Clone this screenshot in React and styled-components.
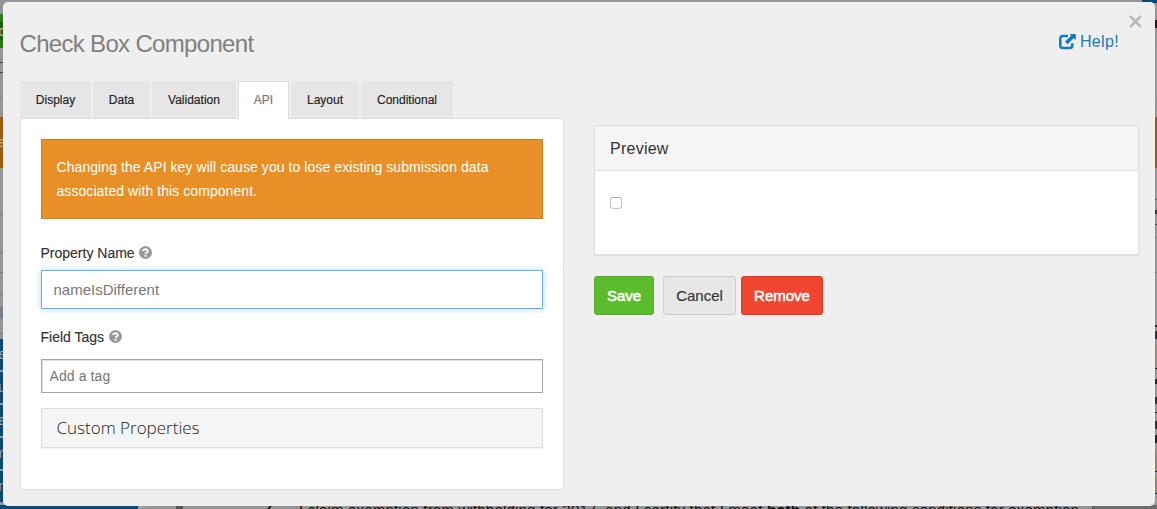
import React from "react";
import styled, { createGlobalStyle, css } from "styled-components";

const Global = createGlobalStyle`
  * { box-sizing: border-box; }
  html, body { margin: 0; height: 100%; overflow: hidden; }
  body { font-family: "Liberation Sans", Arial, sans-serif; color: #333; background: #959595; }
`;

const Page = styled.div`
  position: relative;
  width: 1157px;
  height: 509px;
  overflow: hidden;
  background: #959595;
`;
const Behind = styled.div`
  height: 509px;
  display: flex;
  justify-content: space-between;
`;
const Strip = styled.div`
  width: ${(p) => p.$w}px;
  height: 509px;
  overflow: hidden;
  display: flex;
  flex-direction: column;
`;
const Band = styled.div`
  flex: none;
  height: ${(p) => p.$h}px;
  background: ${(p) => p.$c || "#959595"};
  color: ${(p) => p.$ink || "#222"};
  font-size: 14px;
  line-height: ${(p) => p.$h}px;
  overflow: hidden;
  direction: ${(p) => (p.$end ? "rtl" : "ltr")};
  white-space: nowrap;
`;
const Footer = styled.div`
  position: absolute;
  left: 0;
  top: 505px;
  width: 1157px;
  height: 4px;
  display: flex;
  overflow: hidden;
  background: #959595;
`;
const FooterNav = styled.div`
  width: 138px;
  background: #0b4a78;
`;
const FooterGap = styled.div`
  width: 38px;
  border-left: 7px solid #a0a0a0;
  background: #959595;
`;
const FooterMark = styled.div`
  width: 7px;
  background: #555;
`;
const FooterNumber = styled.div`
  width: 116px;
  padding-left: 82px;
  margin-top: -6px;
  font: italic bold 15px/16px "Liberation Sans", sans-serif;
  color: #111;
`;
const FooterText = styled.div`
  width: 794px;
  height: 8px;
  margin-top: -3px;
  font-size: 15px;
  line-height: 16px;
  letter-spacing: 0.19px;
  white-space: nowrap;
  color: #111;
  border-right: 1px solid #555;
`;
const FooterEnd = styled.div`
  flex: 1;
  background: #6c6c6c;
`;

const Modal = styled.div`
  position: absolute;
  left: 3px;
  top: 2px;
  width: 1152px;
  height: 504px;
  padding: 0 16px 0 17px;
  border-radius: 5px;
  background: #efefef;
`;
const Header = styled.div`
  height: 79px;
  display: flex;
  justify-content: space-between;
`;
const Title = styled.h1`
  margin: 28px 0 0 -0.5px;
  font-size: 24px;
  line-height: 28px;
  font-weight: 400;
  letter-spacing: -0.68px;
  color: #808080;
`;
const Help = styled.a`
  margin: 30px 20px 0 0;
  height: 20px;
  display: flex;
  align-items: center;
  gap: 4px;
  font-size: 16px;
  line-height: 20px;
  letter-spacing: 0.35px;
  color: #127bbe;
`;
const Close = styled.svg`
  position: absolute;
  right: 13px;
  top: 13px;
`;

const Columns = styled.div`
  display: flex;
  gap: 30px;
`;
const Left = styled.div`
  width: 544px;
`;
const Right = styled.div`
  width: 545px;
  padding-top: 44px;
`;
const Tabs = styled.div`
  display: flex;
  gap: 2px;
  height: 37px;
`;
const Tab = styled.div`
  width: ${(p) => p.$w}px;
  height: 37px;
  display: flex;
  justify-content: center;
  font-size: 12px;
  line-height: 38px;
  background: #e6e6e6;
  color: #222;
  -webkit-text-stroke: 0.15px currentColor;
  ${(p) =>
    p.$active &&
    css`
      position: relative;
      height: 38px;
      line-height: 36px;
      background: #fff;
      color: #777;
      border: 1px solid #ddd;
      border-bottom: 0;
    `}
`;
const TabBody = styled.div`
  height: 372px;
  padding: 20px;
  background: #fff;
  border: 1px solid #ddd;
`;
const Alert = styled.div`
  height: 80px;
  padding: 15px 14.5px;
  background: #e89025;
  border: 1px solid #cb7f22;
  color: #fff;
  font-size: 14px;
  line-height: 24px;
  letter-spacing: 0.07px;
  white-space: nowrap;
`;
const Label = styled.label`
  display: flex;
  align-items: center;
  gap: 5px;
  height: 20px;
  margin: ${(p) => p.$top}px 0 0 -0.5px;
  font-size: 14px;
  color: #333;
  -webkit-text-stroke: 0.15px currentColor;
`;
const HelpIcon = styled.svg`
  margin: -2px 0 0 -0.5px;
`;
const Input = styled.div`
  height: 39px;
  margin-top: 7px;
  padding-left: 11.5px;
  border: 1px solid #66afe9;
  box-shadow: 0 0 6px rgba(102, 175, 233, 0.5);
  font-size: 15px;
  line-height: 38px;
  color: #777;
`;
const TagInput = styled.div`
  height: 34px;
  margin-top: 12px;
  padding-left: 7.5px;
  border: 1px solid #a6a6a6;
  box-shadow: inset 1px 1px 1px #ddd;
  font-size: 14px;
  line-height: 33px;
  letter-spacing: 0.1px;
  color: #757575;
`;
const Custom = styled.div`
  height: 40px;
  margin-top: 15px;
  padding-left: 14.5px;
  border: 1px solid #ddd;
  background: #f5f5f5;
  box-shadow: 0 1px 1px rgba(0, 0, 0, 0.05);
  font-family: "Open Sans", sans-serif;
  font-weight: 300;
  font-size: 17px;
  line-height: 38px;
  color: #222;
`;
const Panel = styled.div`
  height: 130px;
  background: #fff;
  border: 1px solid #ddd;
  box-shadow: 0 1px 1px rgba(0, 0, 0, 0.05);
`;
const PanelHead = styled.div`
  height: 45px;
  padding-left: 15px;
  border-bottom: 1px solid #ddd;
  background: #f5f5f5;
  font-size: 16px;
  line-height: 45px;
  letter-spacing: 0.25px;
  color: #333;
`;
const Check = styled.div`
  width: 12px;
  height: 12px;
  margin: 26px 0 0 15px;
  border: 1px solid #c3c3c3;
  border-top-color: #aaa;
  border-radius: 3px;
  background: #fff;
`;
const Actions = styled.div`
  display: flex;
  margin-top: 21px;
`;
const Button = styled.button`
  width: ${(p) => p.$w}px;
  height: 39px;
  margin: 0 ${(p) => p.$gap || 0}px 0 0;
  padding: 0;
  border: 1px solid ${(p) => p.$border};
  border-radius: 3px;
  background: ${(p) => p.$bg};
  color: ${(p) => p.$ink || "#fff"};
  font-family: inherit;
  font-size: 15px;
  -webkit-text-stroke: ${(p) => (p.$ink ? 0.15 : 0.5)}px currentColor;
`;

const HelpMark = () => (
  <HelpIcon width="13" height="13" viewBox="0 0 13 13">
    <circle cx="6.5" cy="6.5" r="6.5" fill="#999" />
    <path d="M4.3 5C4.3 2.7 8.8 2.6 8.8 5C8.8 6.5 6.6 6.4 6.6 8" fill="none" stroke="#fff" strokeWidth="1.9" />
    <rect x="5.6" y="8.9" width="2" height="1.8" fill="#fff" />
  </HelpIcon>
);
const External = () => (
  <svg width="17" height="17" viewBox="0 0 17 17">
    <path
      d="M9 1.9H4Q1.3 1.9 1.3 4.5V11.5Q1.3 14.1 4 14.1H10.7Q13.3 14.1 13.3 11.5V9.3"
      fill="none"
      stroke="#127bbe"
      strokeWidth="2.5"
    />
    <path d="M10 -0.5H16.8V6.3L14.7 4.2L8.6 10.3L6 7.7L12.1 1.6Z" fill="#127bbe" />
  </svg>
);

const LEFT = [
  [14], [8, "#2d7a12"], [18, "#1f5c0c", "#bbb", "o"], [8, "#2d7a12"], [14],
  [1, "#444"], [9], [1, "#444"], [23], [1, "#858585"], [20],
  [51, "#9b5a0e", "#c5b08f", "a"], [46], [1, "#777"], [37], [1, "#777"], [19],
  [1, "#777"], [21], [1, "#777"], [12], [12, "#7b7f8a"], [14], [1, "#777"], [5],
];
const NAV = ["e", "u", "a", "m", "n"];
const RIGHT = [
  [3, "#0b4a78"], [17], [8, "#2b1515"], [20], [49, "#999"], [20],
  [51, "#9b5a0e"], [31], [1, "#666"], [10], [4, "#333"], [10], [1, "#444"], [12], [1, "#777"],
  [34], [1, "#777"], [52], [2, "#222"], [4], [8, "#333"], [5], [24, "#948c72"], [1, "#222"],
  [10], [5, "#222"], [13], [7, "#333"], [8], [1, "#222"], [8], [8, "#333"], [6], [8, "#222"],
  [6], [22, "#8e8a6a"], [1, "#222"], [4], [17, "#8e8a6a"], [1, "#222"],
];

export default function App() {
  return (
    <>
      <Global />
      <Page>
        <Behind>
          <Strip $w={6}>
            {LEFT.map(([h, c, ink, t], i) => (
              <Band key={i} $h={h} $c={c} $ink={ink} $end>{t}</Band>
            ))}
            {NAV.map((t) => (
              <React.Fragment key={t}>
                <Band $h={31} $c="#0b4a78" $ink="#9eacb6" $end>{t}</Band>
                <Band $h={2} $c="#8f9aa2" />
              </React.Fragment>
            ))}
          </Strip>
          <Strip $w={15}>
            {RIGHT.map(([h, c], i) => (
              <Band key={i} $h={h} $c={c} />
            ))}
          </Strip>
        </Behind>
        <Footer>
          <FooterNav />
          <FooterGap />
          <FooterMark />
          <FooterNumber>7</FooterNumber>
          <FooterText>
            I claim exemption from withholding for 2017, and I certify that I meet <b>both</b> of the
            following conditions for exemption
          </FooterText>
          <FooterEnd />
        </Footer>

        <Modal>
          <Header>
            <Title>Check Box Component</Title>
            <Help>
              <External />
              Help!
            </Help>
          </Header>
          <Close width="13" height="13" viewBox="0 0 13 13">
            <path d="M1 1L12 12M12 1L1 12" stroke="#bbb" strokeWidth="2.6" />
          </Close>
          <Columns>
            <Left>
              <Tabs>
                <Tab $w={71}>Display</Tab>
                <Tab $w={57}>Data</Tab>
                <Tab $w={84}>Validation</Tab>
                <Tab $w={51} $active>API</Tab>
                <Tab $w={68}>Layout</Tab>
                <Tab $w={92}>Conditional</Tab>
              </Tabs>
              <TabBody>
                <Alert>
                  Changing the API key will cause you to lose existing submission data
                  <br />
                  associated with this component.
                </Alert>
                <Label $top={24}>Property Name <HelpMark /></Label>
                <Input>nameIsDifferent</Input>
                <Label $top={18}>Field Tags <HelpMark /></Label>
                <TagInput>Add a tag</TagInput>
                <Custom>Custom Properties</Custom>
              </TabBody>
            </Left>
            <Right>
              <Panel>
                <PanelHead>Preview</PanelHead>
                <Check />
              </Panel>
              <Actions>
                <Button $w={60} $gap={9} $bg="#5bbd2c" $border="#51a927">Save</Button>
                <Button $w={73} $gap={5} $bg="#e7e7e7" $border="#cbcbcb" $ink="#333">Cancel</Button>
                <Button $w={82} $bg="#f04530" $border="#e8321c">Remove</Button>
              </Actions>
            </Right>
          </Columns>
        </Modal>
      </Page>
    </>
  );
}
